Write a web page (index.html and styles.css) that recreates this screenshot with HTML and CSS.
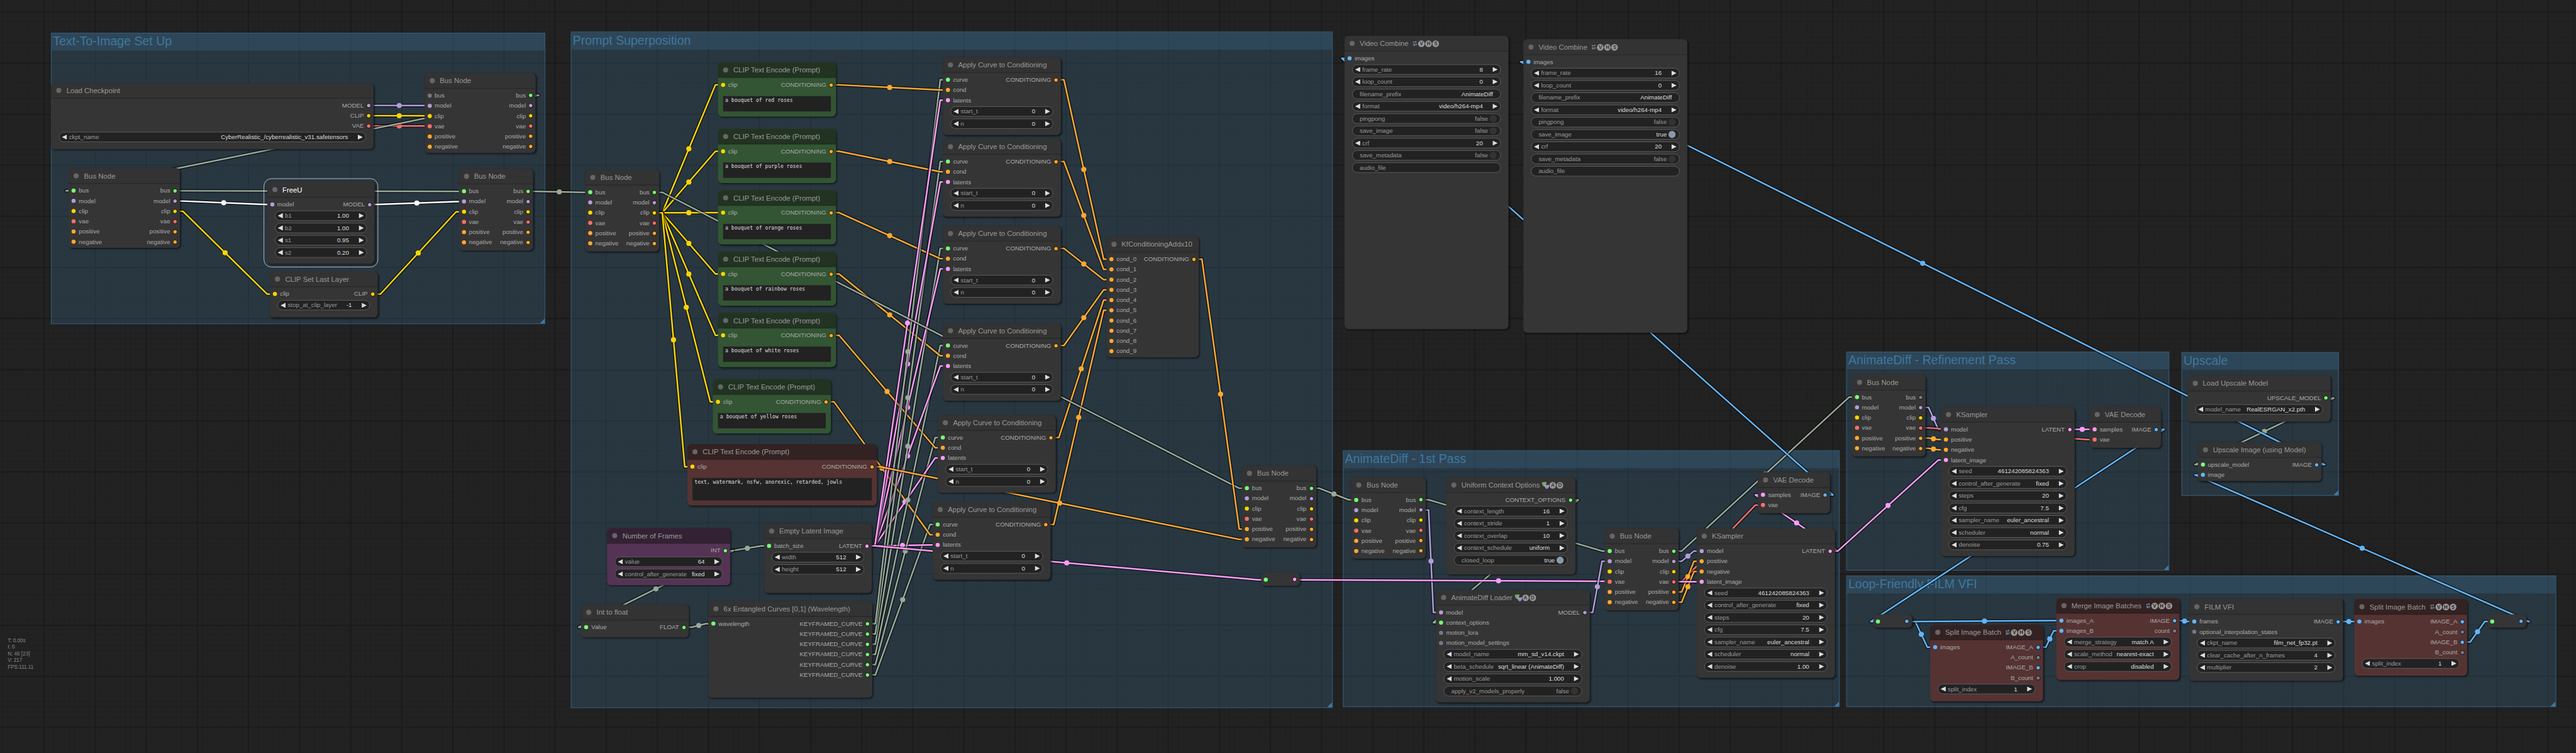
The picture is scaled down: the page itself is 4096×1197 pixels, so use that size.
FILE: index.html
```html
<!DOCTYPE html>
<html lang="en">
<head>
<meta charset="utf-8">
<title>Workflow</title>
<link rel="stylesheet" href="styles.css">
</head>
<body>
<main class="viewport">
  <div class="graph" id="graph">
    <div class="layer" id="groups"></div>
    <svg class="links" id="links" width="5041" height="1473" viewBox="0 0 5041 1473" aria-hidden="true"></svg>
    <div class="layer" id="nodes"></div>
    <div class="stats">
      <div>T: 0.00s</div>
      <div>I: 0</div>
      <div>N: 46 [23]</div>
      <div>V: 217</div>
      <div>FPS:111.11</div>
    </div>
  </div>
</main>
<script src="graph.js"></script>
</body>
</html>
```
FILE: styles.css
```css
* { box-sizing: border-box; }

html, body {
  margin: 0;
  background: #222;
}

body {
  font-family: "Liberation Sans", Arial, sans-serif;
}

.viewport {
  width: 4096px;
  height: 1197px;
  overflow: hidden;
  position: relative;
}

.graph {
  position: absolute;
  left: 0;
  top: 0;
  width: 5041px;
  height: 1473px;
  transform: scale(0.81254);
  transform-origin: 0 0;
  background-color: #222;
  background-image:
    linear-gradient(to right, #1a1a1a 2px, transparent 2px),
    linear-gradient(to bottom, #1a1a1a 2px, transparent 2px),
    linear-gradient(to right, #1f1f1f 1px, transparent 1px),
    linear-gradient(to bottom, #1f1f1f 1px, transparent 1px);
  background-size: 100px 100px, 100px 100px, 10px 10px, 10px 10px;
  background-position: 85px 22px, 85px 22px, 5px 2px, 5px 2px;
}

.layer, .links {
  position: absolute;
  left: 0;
  top: 0;
}

.links { fill: none; stroke-linejoin: round; }
.link-edge { stroke: #000; stroke-opacity: .5; stroke-width: 7; }
.link-core { stroke-width: 3; }

.stats {
  position: absolute;
  left: 15px;
  top: 1246px;
  font-size: 10px;
  line-height: 13px;
  color: #888;
}

/* groups */
.group {
  position: absolute;
  background: rgba(63, 120, 158, .25);
  border: 1px solid #37688a;
  overflow: hidden;
}
.group-title {
  height: 34px;
  padding-left: 3px;
  background: rgba(63, 120, 158, .25);
  color: #3f789e;
  font-size: 24px;
  line-height: 31px;
  white-space: nowrap;
}
.group-grip {
  position: absolute;
  right: 0;
  bottom: 0;
  width: 10px;
  height: 10px;
  background: linear-gradient(to bottom right, transparent 50%, #3f789e 50%);
}

/* nodes */
.node {
  position: absolute;
  display: flex;
  flex-direction: column;
  border-radius: 8px;
  background: #353535;
  box-shadow: 2px 2px 3px rgba(0, 0, 0, .5);
  color: #aaa;
  font-size: 12px;
  white-space: nowrap;
}
.node-title {
  display: flex;
  align-items: center;
  height: 30px;
  flex: none;
  padding-left: 10px;
  border-radius: 8px 8px 0 0;
  background: #333;
  box-shadow: 0 1px 0 rgba(0, 0, 0, .2), inset 0 -1px 0 rgba(0, 0, 0, .2);
  color: #999;
  font-size: 14px;
  line-height: 30px;
}
.node-title::before {
  content: "";
  width: 10px;
  height: 10px;
  margin-right: 10px;
  border-radius: 50%;
  background: #666;
}
.green { background: #353; }
.green .node-title { background: #232; }
.red { background: #533; }
.red .node-title { background: #322; }
.purple { background: #535; }
.purple .node-title { background: #323; }
.selected { outline: 1px solid rgba(255, 255, 255, .8); outline-offset: 6px; }
.selected .node-title { color: #fff; }

.slots {
  display: flex;
  justify-content: space-between;
  padding: 4px 5px 0 6px;
}
.slot {
  display: flex;
  align-items: center;
  gap: 6px;
  height: 20px;
  line-height: 22px;
}
.outputs .slot { justify-content: flex-end; gap: 5px; }
.dot {
  width: 8px;
  height: 8px;
  border-radius: 50%;
}
.outputs .dot { width: 9px; height: 9px; border: 1px solid #000; }

.c-any { background: #7f7; }
.c-off { background: #778; }
.c-model { background: #b39ddb; }
.c-clip { background: #ffd500; }
.c-vae { background: #ff6e6e; }
.c-cond { background: #ffa931; }
.c-latent { background: #ff9cf9; }
.c-image { background: #64b5f6; }

.widgets {
  display: flex;
  flex-direction: column;
  gap: 4px;
  margin: 2px 15px 0;
}
.widget {
  display: flex;
  align-items: center;
  height: 20px;
  padding: 0 5px;
  border: 1px solid #666;
  border-radius: 10px;
  background: #222;
  color: #999;
  line-height: 18px;
}
.widget .value { margin-left: auto; color: #ddd; }
.widget .prev, .widget .next {
  width: 10px;
  height: 10px;
  background: #ddd;
}
.widget .prev { margin-right: 4px; clip-path: polygon(100% 0, 0 50%, 100% 100%); }
.widget .next { margin-left: 19px; clip-path: polygon(0 0, 100% 50%, 0 100%); }
.widget.text { padding: 0 14px; }
.widget.toggle { padding: 0 7px 0 14px; }
.toggle .value { color: #999; }
.toggle .value.on { color: #ddd; }
.knob {
  width: 14px;
  height: 14px;
  margin-left: 3px;
  border-radius: 50%;
  background: #333;
}
.knob.on { background: #89a; }

.prompt {
  margin: 12px 10px 10px;
  flex: 1;
  padding: 2px 4px;
  background: #222;
  color: #ddd;
  font: 10px/12px "DejaVu Sans Mono", monospace;
}

/* reroute nodes have no title bar */
.reroute {
  flex-direction: row;
  align-items: center;
  justify-content: space-between;
  padding: 1px 6px 0 5px;
}
.reroute .dot:last-child { width: 9px; height: 9px; border: 1px solid #000; }

/* title marks */
.mark { flex: none; }
.camera { width: 9px; height: 11px; margin: 0 2px 0 8px; }
.masks { width: 15px; height: 15px; margin-left: 4px; }
.letter {
  width: 13px;
  height: 13px;
  margin-right: 1px;
  border-radius: 50%;
  background: #999;
  color: #333;
  font-size: 10px;
  font-weight: bold;
  line-height: 13px;
  text-align: center;
}
.red .letter { color: #322; }
```
FILE: graph.js
```js
const TITLE = 30;
const SLOT = 20;

const groups = [
  ["Text-To-Image Set Up", 100, 64, 967, 569.5],
  ["Prompt Superposition", 1117, 62, 1490.5, 1322.5],
  ["AnimateDiff - 1st Pass", 2628, 881, 971.5, 502],
  ["AnimateDiff - Refinement Pass", 3613, 688, 631.5, 428],
  ["Upscale", 4269, 689, 307.5, 281],
  ["Loop-Friendly FILM VFI", 3613, 1126, 1389, 257]
];

const busSlots = ["bus:any", "model:model", "clip:clip", "vae:vae", "positive:cond", "negative:cond"];
const busHead = ["bus:off", ...busSlots.slice(1)];

/* widget kinds: n = number or list with arrows, t = text, b = switch */
const samplerWidgets = denoise => [
  "n|seed|461242085824363", "n|control_after_generate|fixed", "n|steps|20", "n|cfg|7.5",
  "n|sampler_name|euler_ancestral", "n|scheduler|normal", "n|denoise|" + denoise
];
const samplerIn = ["model:model", "positive:cond", "negative:cond", "latent_image:latent"];
const splitOut = ["IMAGE_A:image", "A_count:off", "IMAGE_B:image", "B_count:off"];
const videoWidgets = (rate, save) => [
  "n|frame_rate|" + rate, "n|loop_count|0", "t|filename_prefix|AnimateDiff", "n|format|video/h264-mp4",
  "b|pingpong|false", "b|save_image|" + save, "n|crf|20", "b|save_metadata|false", "t|audio_file|"
];

const nodes = {
  busTop: { t: "Bus Node", at: [830.5, 172.5, 217.5, 126], i: busHead, o: busSlots },
  ckpt: { t: "Load Checkpoint", at: [100, 192.3, 631, 100], o: ["MODEL:model", "CLIP:clip", "VAE:vae"],
    w: ["n|ckpt_name|CyberRealistic_/cyberrealistic_v31.safetensors"] },
  bus1: { t: "Bus Node", at: [134.3, 359.4, 217.7, 126], i: busSlots, o: busSlots },
  freeu: { t: "FreeU", c: "selected", at: [522.5, 386, 210.5, 130], i: ["model:model"], o: ["MODEL:model"],
    w: ["n|b1|1.00", "n|b2|1.00", "n|s1|0.95", "n|s2|0.20"] },
  lastLayer: { t: "CLIP Set Last Layer", at: [528, 561.4, 210.5, 60], i: ["clip:clip"], o: ["CLIP:clip"],
    w: ["n|stop_at_clip_layer|-1"] },
  busR: { t: "Bus Node", at: [897.5, 360.4, 145.5, 129.6], i: busSlots, o: busSlots },

  bus2: { t: "Bus Node", at: [1145, 362.3, 145, 129.6], i: busSlots, o: busSlots },
  neg: { t: "CLIP Text Encode (Prompt)", c: "red", at: [1345, 899.2, 371, 90], i: ["clip:clip"], o: ["CONDITIONING:cond"],
    p: "text, watermark, nsfw, anorexic, retarded, jowls" },
  frames: { t: "Number of Frames", c: "purple", at: [1188, 1063, 241, 82], o: ["INT:any"],
    w: ["n|value|64", "n|control_after_generate|fixed"] },
  latent: { t: "Empty Latent Image", at: [1495, 1054, 211, 106], i: ["batch_size:any"], o: ["LATENT:latent"],
    w: ["n|width|512", "n|height|512"] },
  float: { t: "Int to float", at: [1137.3, 1213, 210.5, 34], i: ["Value:any"], o: ["FLOAT:any"] },
  curves: { t: "6x Entangled Curves [0,1] (Wavelength)", at: [1386, 1206.2, 321, 159.3], i: ["wavelength:any"],
    o: Array(6).fill("KEYFRAMED_CURVE:any") },
  kf: { t: "KfConditioningAddx10", at: [2164.7, 493, 181.3, 206],
    i: [0, 1, 2, 3, 4, 5, 6, 7, 8, 9].map(n => "cond_" + n + ":cond"), o: ["CONDITIONING:cond"] },
  bus3: { t: "Bus Node", at: [2430, 941.2, 145.5, 130], i: busSlots, o: busSlots },
  route1: { r: ["any", "latent"], at: [2468, 1120.4, 76, 26] },

  video1: { t: "Video Combine", m: "cVHS", at: [2630.8, 100, 321, 544], i: ["images:image"], w: videoWidgets(8, "false") },
  video2: { t: "Video Combine", m: "cVHS", at: [2980.8, 107, 321, 544], i: ["images:image"], w: videoWidgets(16, "true") },

  bus4: { t: "Bus Node", at: [2644.3, 963.8, 145.4, 129.4], i: busSlots, o: busSlots },
  context: { t: "Uniform Context Options", m: "mAD", at: [2830, 964, 252.7, 160], o: ["CONTEXT_OPTIONS:any"],
    w: ["n|context_length|16", "n|context_stride|1", "n|context_overlap|10", "n|context_schedule|uniform", "b|closed_loop|true"] },
  loader: { t: "AnimateDiff Loader", m: "mAD", at: [2810, 1184, 300.7, 190.3],
    i: ["model:model", "context_options:any", "motion_lora:off", "motion_model_settings:off"], o: ["MODEL:model"],
    w: ["n|model_name|mm_sd_v14.ckpt", "n|beta_schedule|sqrt_linear (AnimateDiff)", "n|motion_scale|1.000", "b|apply_v2_models_properly|false"] },
  bus5: { t: "Bus Node", at: [3140, 1064, 145, 130], i: busSlots, o: busSlots },
  sampler1: { t: "KSampler", at: [3320, 1064, 270.5, 262], i: samplerIn, o: ["LATENT:latent"], w: samplerWidgets("1.00") },
  vae1: { t: "VAE Decode", at: [3440, 954.2, 141, 50], i: ["samples:latent", "vae:vae"], o: ["IMAGE:image"] },

  bus6: { t: "Bus Node", at: [3623.5, 763, 144.5, 130], i: busSlots, o: busHead },
  sampler2: { t: "KSampler", at: [3798, 826, 261.5, 262], i: samplerIn, o: ["LATENT:latent"], w: samplerWidgets("0.75") },
  vae2: { t: "VAE Decode", at: [4089, 826, 140, 50], i: ["samples:latent", "vae:vae"], o: ["IMAGE:image"] },
  upLoad: { t: "Load Upscale Model", at: [4280.5, 764.8, 280.5, 60], o: ["UPSCALE_MODEL:any"], w: ["n|model_name|RealESRGAN_x2.pth"] },
  upImage: { t: "Upscale Image (using Model)", at: [4300.5, 895, 242.7, 46], i: ["upscale_model:any", "image:image"], o: ["IMAGE:image"] },

  route2: { r: ["any", "image"], at: [3666, 1202, 76, 26] },
  split1: { t: "Split Image Batch", m: "cVHS", c: "red", at: [3776.6, 1252, 221, 120], i: ["images:image"], o: splitOut, w: ["n|split_index|1"] },
  merge: { t: "Merge Image Batches", m: "cVHS", c: "red", at: [4023.8, 1200, 241, 130], i: ["images_A:image", "images_B:image"],
    o: ["IMAGE:image", "count:off"], w: ["n|merge_strategy|match A", "n|scale_method|nearest-exact", "n|crop|disabled"] },
  film: { t: "FILM VFI", at: [4284, 1202, 301, 130], i: ["frames:image", "optional_interpolation_states:off"], o: ["IMAGE:image"],
    w: ["n|ckpt_name|film_net_fp32.pt", "n|clear_cache_after_n_frames|4", "n|multiplier|2"] },
  split2: { t: "Split Image Batch", m: "cVHS", c: "red", at: [4607, 1202, 221, 120], i: ["images:image"], o: splitOut, w: ["n|split_index|1"] },
  route3: { r: ["any", "image"], at: [4867.5, 1202, 76, 26] }
};

const prompts = [
  ["red", 1405, 152, 1845, 142], ["purple", 1405, 282, 1845, 302], ["orange", 1405, 402, 1845, 472],
  ["rainbow", 1405, 522, 1845, 662], ["white", 1405, 642, 1835, 842], ["yellow", 1395, 772, 1825, 1012]
];
prompts.forEach(([color, x, y, ax, ay], k) => {
  nodes["text" + k] = { t: "CLIP Text Encode (Prompt)", c: "green", at: [x, y, 231, 76], i: ["clip:clip"],
    o: ["CONDITIONING:cond"], p: "a bouquet of " + color + " roses" };
  nodes["apply" + k] = { t: "Apply Curve to Conditioning", at: [ax, ay, 231, 122],
    i: ["curve:any", "cond:cond", "latents:latent"], o: ["CONDITIONING:cond"], w: ["n|start_t|0", "n|n|0"] };
});

/* from, output, to, input, colour */
const GREY = "#9a9", MODEL = "#b39ddb", CLIP = "#ffd500", VAE = "#ff6e6e";
const COND = "#ffa931", LATENT = "#ff9cf9", IMAGE = "#64b5f6";
const links = [
  ["ckpt", 0, "busTop", 1, MODEL], ["ckpt", 1, "busTop", 2, CLIP], ["ckpt", 2, "busTop", 3, VAE],
  ["busTop", 0, "bus1", 0, GREY], ["bus1", 1, "freeu", 0, "#fff"], ["bus1", 2, "lastLayer", 0, CLIP],
  ["bus1", 0, "busR", 0, GREY], ["freeu", 0, "busR", 1, "#fff"], ["lastLayer", 0, "busR", 2, CLIP],
  ...[0, 1, 2, 3, 4, 5].map(k => ["bus2", 2, "text" + k, 0, CLIP]),
  ["bus2", 2, "neg", 0, CLIP],
  ["busR", 0, "bus2", 0, GREY],
  ["frames", 0, "latent", 0, GREY], ["frames", 0, "float", 0, GREY], ["float", 0, "curves", 0, GREY],
  ...[5, 4, 3, 2, 1, 0].flatMap(k => [
    ["curves", k, "apply" + k, 0, GREY], ["text" + k, 0, "apply" + k, 1, COND], ["latent", 0, "apply" + k, 2, LATENT]
  ]),
  ...[0, 1, 2, 3, 4, 5].map(k => ["apply" + k, 0, "kf", k, COND]),
  ["latent", 0, "route1", 0, LATENT],
  ["bus2", 0, "bus3", 0, GREY], ["kf", 0, "bus3", 4, COND], ["neg", 0, "bus3", 5, COND],
  ["bus3", 0, "bus4", 0, GREY],
  ["bus4", 1, "loader", 0, MODEL], ["context", 0, "loader", 1, GREY],
  ["bus4", 0, "bus5", 0, GREY],
  ["bus5", 3, "vae1", 1, VAE],
  ["bus5", 1, "sampler1", 0, MODEL], ["bus5", 4, "sampler1", 1, COND], ["bus5", 5, "sampler1", 2, COND],
  ["route1", 0, "sampler1", 3, LATENT],
  ["loader", 0, "bus5", 1, MODEL],
  ["sampler1", 0, "vae1", 0, LATENT],
  ["bus5", 0, "bus6", 0, GREY],
  ["vae1", 0, "video1", 0, IMAGE],
  ["bus6", 1, "sampler2", 0, MODEL], ["bus6", 4, "sampler2", 1, COND], ["bus6", 5, "sampler2", 2, COND],
  ["sampler1", 0, "sampler2", 3, LATENT],
  ["sampler2", 0, "vae2", 0, LATENT], ["bus6", 3, "vae2", 1, VAE],
  ["vae2", 0, "route2", 0, IMAGE],
  ["upLoad", 0, "upImage", 0, GREY], ["upImage", 0, "video2", 0, IMAGE],
  ["route2", 0, "split1", 0, IMAGE], ["split1", 0, "merge", 1, IMAGE], ["route2", 0, "merge", 0, IMAGE],
  ["merge", 0, "film", 0, IMAGE], ["film", 0, "split2", 0, IMAGE],
  ["split2", 2, "route3", 0, IMAGE], ["route3", 0, "upImage", 1, IMAGE]
];

const CAMERA = '<svg class="mark camera" viewBox="0 0 9 11"><g fill="#6f8799"><circle cx="2.4" cy="2.6" r="1.5"/><circle cx="6.4" cy="2" r="1.6"/></g><path d="M1 5h6v5H1z" fill="#44586a"/><path d="M7 6l2-1v4L7 8z" fill="#6f8799"/><path d="M2.5 6.5h2v2h-2z" fill="#8fa3b3"/></svg>';
const MASKS = '<svg class="mark masks" viewBox="0 0 15 15"><path d="M.5 1.5C3 2 6 1.6 9 .8c.4 3.600-.5 7.400-3.500 8.700C2 9 .6 5 .5 1.500z" fill="#8fbf6a"/><path d="M2 4l2-.4M6 3.400l1.800-.5M2.600 6q2.400 1.600 4.600-.8" stroke="#40622c" fill="none"/><path d="M5.600 6.600c3 .8 5.600.8 8.800 0 .3 3.600-1 7-4.200 7.900-3.200-.9-4.800-4.300-4.600-7.900z" fill="#b9a0e6"/><path d="M7 9h2M11 9h2M8.200 12.300q1.800-1.300 3.600 0" stroke="#5e4a8a" fill="none"/></svg>';

const marks = code => [...(code || "")].map(ch =>
  ch === "c" ? CAMERA : ch === "m" ? MASKS : `<span class="mark letter">${ch}</span>`).join("");

const slotHtml = (list, out) => (list || []).map(s => {
  const [name, type] = s.split(":");
  const dot = `<span class="dot c-${type}"></span>`;
  return `<div class="slot">${out ? name + dot : dot + name}</div>`;
}).join("");

function widgetHtml(spec) {
  const [kind, name, value] = spec.split("|");
  if (kind === "t") return `<div class="widget text">${name}<span class="value">${value}</span></div>`;
  if (kind === "b") {
    const on = value === "true" ? " on" : "";
    return `<div class="widget toggle">${name}<span class="value${on}">${value}</span><span class="knob${on}"></span></div>`;
  }
  return `<div class="widget"><span class="prev"></span>${name}<span class="value">${value}</span><span class="next"></span></div>`;
}

const box = (x, y, w, h) => `left:${x}px;top:${y}px;width:${w}px;height:${h}px`;

function nodeHtml(n) {
  const [x, y, w, h] = n.at;
  if (n.r) return `<div class="node reroute" style="${box(x, y, w, h)}">${n.r.map(c => `<span class="dot c-${c}"></span>`).join("")}</div>`;
  return `<section class="node ${n.c || ""}" style="${box(x, y - TITLE, w, h + TITLE)}">
    <div class="node-title">${n.t}${marks(n.m)}</div>
    <div class="slots"><div class="inputs">${slotHtml(n.i)}</div><div class="outputs">${slotHtml(n.o, true)}</div></div>
    ${n.w ? `<div class="widgets">${n.w.map(widgetHtml).join("")}</div>` : ""}
    ${n.p ? `<div class="prompt">${n.p}</div>` : ""}
  </section>`;
}

function linkSvg([from, out, to, input, color]) {
  const a = nodes[from].at, b = nodes[to].at;
  const x1 = a[0] + a[2] - 9, y1 = a[1] + 14 + out * SLOT;
  const x2 = b[0] + 10, y2 = b[1] + 14 + input * SLOT;
  const d = `M${x1} ${y1}H${x1 + 15}L${x2 - 15} ${y2}H${x2}`;
  return `<path class="link-edge" d="${d}"/><path class="link-core" stroke="${color}" d="${d}"/>` +
    `<circle cx="${(x1 + x2) / 2}" cy="${(y1 + y2) / 2}" r="5" fill="${color}"/>`;
}

document.getElementById("groups").innerHTML = groups.map(([title, x, y, w, h]) =>
  `<div class="group" style="${box(x, y, w, h)}"><div class="group-title">${title}</div><div class="group-grip"></div></div>`).join("");
document.getElementById("links").innerHTML = links.map(linkSvg).join("");
document.getElementById("nodes").innerHTML = Object.values(nodes).map(nodeHtml).join("");
```
